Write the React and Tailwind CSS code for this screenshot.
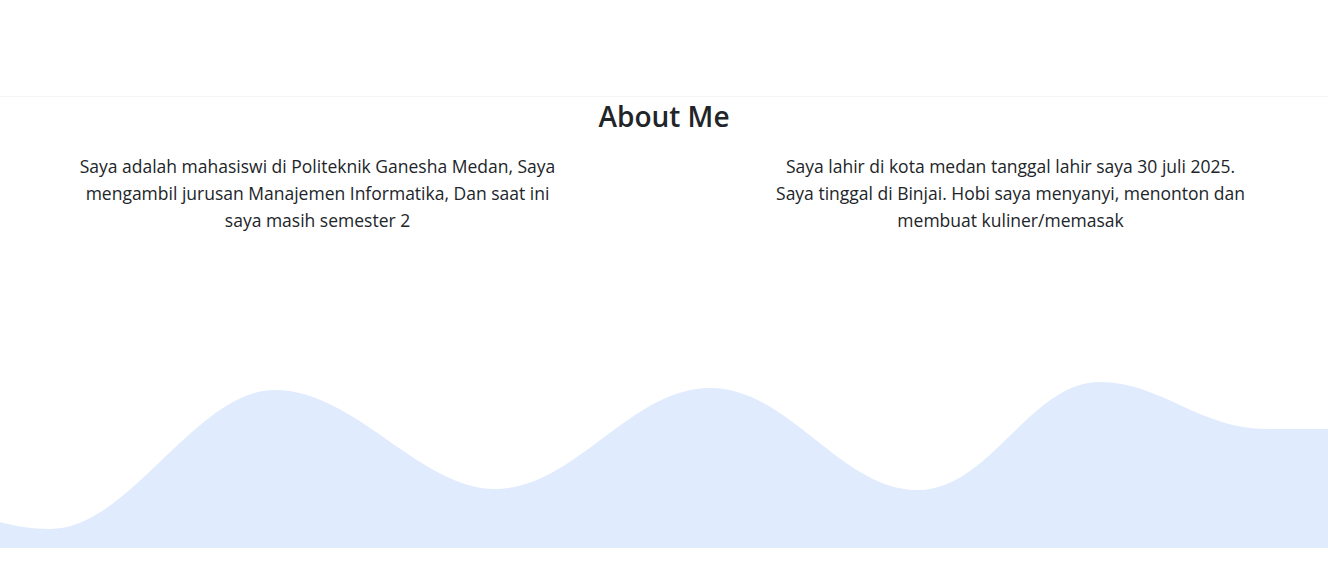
import React from "react";

function Wave() {
  return (
    <svg viewBox="0 0 1328 170" preserveAspectRatio="none" className="block w-full h-[170px]">
      <path
        fill="#e0ebfe"
        d="M0,144 C15,148 30,151 50,151 C130,151 195,12 275,12 C355,12 420,111 495,111 C575,111 630,10 710,10 C790,10 840,112 918,112 C990,112 1030,4 1100,4 C1160,4 1200,51 1267,51 L1328,51 L1328,170 L0,170 Z"
      />
    </svg>
  );
}

export default function App() {
  return (
    <div className="min-h-screen bg-white text-[#212529] font-['Open_Sans',sans-serif]">
      {/* navbar space */}
      <header className="h-[97px] border-b border-[#f5f5f5]" />

      <section>
        <h2 className="text-center text-[28px] leading-[38px] font-semibold">About Me</h2>
        <div className="flex justify-center gap-[189px] mt-[18px] text-[17.5px] leading-[27px] text-center">
          <p className="w-[504px] px-[8px]">
            Saya adalah mahasiswi di Politeknik Ganesha Medan, Saya mengambil jurusan Manajemen Informatika, Dan saat ini saya masih semester 2
          </p>
          <p className="w-[504px] px-[8px]">
            Saya lahir di kota medan tanggal lahir saya 30 juli 2025. Saya tinggal di Binjai. Hobi saya menyanyi, menonton dan membuat kuliner/memasak
          </p>
        </div>
        <div className="mt-[144px]">
          <Wave />
        </div>
      </section>
      <div className="h-[40px]" />
    </div>
  );
}
